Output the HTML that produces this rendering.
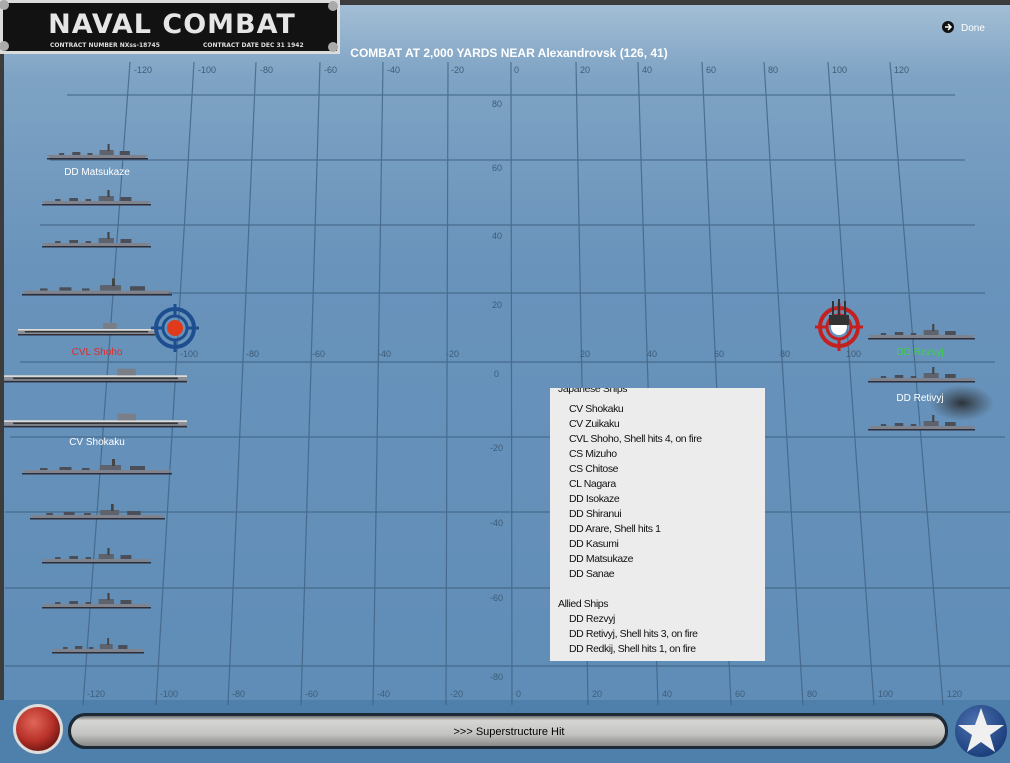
<!DOCTYPE html>
<html><head><meta charset="utf-8"><style>
html,body{margin:0;padding:0;width:1010px;height:763px;overflow:hidden;background:#5f8ab0;font-family:"Liberation Sans",sans-serif}
svg{position:absolute;left:0;top:0}
.pop{position:absolute;left:550px;top:388px;width:215px;height:273px;background:#ececec;font-size:10.5px;color:#111;letter-spacing:-0.4px;overflow:hidden}
.pop div{height:15px;line-height:15px;padding-left:19px}
.pop .h{padding-left:8px}
</style></head><body>
<svg width="1010" height="763" viewBox="0 0 1010 763">
<defs>
<linearGradient id="sea" x1="0" y1="0" x2="0" y2="1">
<stop offset="0" stop-color="#a6c0d6"/><stop offset="0.1" stop-color="#7ea3c4"/><stop offset="0.35" stop-color="#6993bb"/><stop offset="1" stop-color="#5e8cb6"/></linearGradient>
<linearGradient id="bar" x1="0" y1="0" x2="0" y2="1">
<stop offset="0" stop-color="#6f6f6f"/><stop offset="0.15" stop-color="#d6d6d4"/><stop offset="0.6" stop-color="#c4c4c2"/><stop offset="1" stop-color="#8a8a88"/></linearGradient>
<radialGradient id="red" cx="0.4" cy="0.35" r="0.7"><stop offset="0" stop-color="#e0675a"/><stop offset="0.6" stop-color="#b8322a"/><stop offset="1" stop-color="#6e1410"/></radialGradient>
<radialGradient id="blu" cx="0.4" cy="0.35" r="0.7"><stop offset="0" stop-color="#4d73b0"/><stop offset="1" stop-color="#183a78"/></radialGradient>
<radialGradient id="smk" cx="0.5" cy="0.5" r="0.5"><stop offset="0" stop-color="#222" stop-opacity="0.85"/><stop offset="1" stop-color="#333" stop-opacity="0"/></radialGradient>
<g id="ship"><path d="M0 6 L100 6 L96 10 L4 10 Z" fill="#7f838e"/><rect x="0" y="9" width="100" height="1.5" fill="#2e2e3a"/><rect x="52" y="1" width="14" height="5" fill="#5e626c"/><rect x="60" y="-5" width="2" height="7" fill="#444"/><rect x="25" y="3" width="8" height="3" fill="#4a4e58"/><rect x="72" y="2" width="10" height="4" fill="#4a4e58"/><rect x="12" y="4" width="5" height="2" fill="#4a4e58"/><rect x="40" y="4" width="5" height="2" fill="#4a4e58"/></g>
<g id="cv"><rect x="0" y="3" width="100" height="6" fill="#8a8e96"/><rect x="0" y="3" width="100" height="1.5" fill="#dedede"/><rect x="5" y="5" width="90" height="1.5" fill="#333"/><rect x="0" y="8" width="100" height="1.5" fill="#2e2e3a"/><rect x="62" y="-3" width="10" height="6" fill="#7a7e86"/></g>
</defs>
<rect width="1010" height="763" fill="url(#sea)"/>
<rect x="0" y="0" width="1010" height="5" fill="#3c3c3c"/>
<rect x="0" y="0" width="4" height="763" fill="#3c3c3c"/>
<rect x="0" y="700" width="1010" height="63" fill="#4f80ab"/>
<g stroke="#3d5f80" stroke-width="1.2" opacity="0.75">
<line x1="67" y1="95" x2="955" y2="95"/>
<line x1="50" y1="160" x2="965" y2="160"/>
<line x1="40" y1="225" x2="975" y2="225"/>
<line x1="30" y1="293" x2="985" y2="293"/>
<line x1="20" y1="362" x2="995" y2="362"/>
<line x1="10" y1="437" x2="1005" y2="437"/>
<line x1="5" y1="512" x2="1010" y2="512"/>
<line x1="5" y1="588" x2="1010" y2="588"/>
<line x1="5" y1="666" x2="1010" y2="666"/>
<line x1="130" y1="62" x2="83" y2="705"/>
<line x1="194" y1="62" x2="156" y2="705"/>
<line x1="256" y1="62" x2="228" y2="705"/>
<line x1="320" y1="62" x2="301" y2="705"/>
<line x1="383" y1="62" x2="373" y2="705"/>
<line x1="448" y1="62" x2="446" y2="705"/>
<line x1="511" y1="62" x2="512" y2="705"/>
<line x1="576" y1="62" x2="588" y2="705"/>
<line x1="638" y1="62" x2="658" y2="705"/>
<line x1="702" y1="62" x2="731" y2="705"/>
<line x1="764" y1="62" x2="803" y2="705"/>
<line x1="828" y1="62" x2="874" y2="705"/>
<line x1="890" y1="62" x2="943" y2="705"/>
</g>
<g font-size="9" fill="#3e5c78" font-family="Liberation Sans,sans-serif">
<text x="134" y="73">-120</text><text x="198" y="73">-100</text><text x="260" y="73">-80</text><text x="324" y="73">-60</text><text x="387" y="73">-40</text><text x="451" y="73">-20</text><text x="514" y="73">0</text><text x="580" y="73">20</text><text x="642" y="73">40</text><text x="706" y="73">60</text><text x="768" y="73">80</text><text x="832" y="73">100</text><text x="894" y="73">120</text>
<text x="492" y="107">80</text><text x="492" y="171">60</text><text x="492" y="239">40</text><text x="492" y="308">20</text><text x="494" y="377">0</text><text x="490" y="451">-20</text><text x="490" y="526">-40</text><text x="490" y="601">-60</text><text x="490" y="680">-80</text>
<text x="180" y="357">-100</text><text x="246" y="357">-80</text><text x="312" y="357">-60</text><text x="378" y="357">-40</text><text x="446" y="357">-20</text><text x="580" y="357">20</text><text x="647" y="357">40</text><text x="714" y="357">60</text><text x="780" y="357">80</text><text x="846" y="357">100</text>
<text x="87" y="697">-120</text><text x="160" y="697">-100</text><text x="232" y="697">-80</text><text x="305" y="697">-60</text><text x="377" y="697">-40</text><text x="450" y="697">-20</text><text x="516" y="697">0</text><text x="592" y="697">20</text><text x="662" y="697">40</text><text x="735" y="697">60</text><text x="807" y="697">80</text><text x="878" y="697">100</text><text x="947" y="697">120</text>
</g>
<use href="#ship" transform="translate(47,149) scale(1.01,1)"/>
<use href="#ship" transform="translate(42,195) scale(1.09,1)"/>
<use href="#ship" transform="translate(42,237) scale(1.09,1)"/>
<use href="#ship" transform="translate(22,284) scale(1.5,1.1)"/>
<use href="#cv" transform="translate(18,326) scale(1.37,1)"/>
<use href="#cv" transform="translate(4,372) scale(1.83,1.1)"/>
<use href="#cv" transform="translate(4,417) scale(1.83,1.1)"/>
<use href="#ship" transform="translate(22,464) scale(1.5,1)"/>
<use href="#ship" transform="translate(30,509) scale(1.35,1)"/>
<use href="#ship" transform="translate(42,553) scale(1.09,1)"/>
<use href="#ship" transform="translate(42,598) scale(1.09,1)"/>
<use href="#ship" transform="translate(52,643) scale(0.92,1)"/>
<use href="#ship" transform="translate(868,329) scale(1.07,1)"/>
<use href="#ship" transform="translate(868,372) scale(1.07,1)"/>
<use href="#ship" transform="translate(868,420) scale(1.07,1)"/>
<ellipse cx="962" cy="403" rx="32" ry="18" fill="url(#smk)"/>
<g font-size="10" fill="#fff" text-anchor="middle">
<text x="97" y="175">DD Matsukaze</text><text x="97" y="355" fill="#e02a2a">CVL Shoho</text><text x="97" y="445">CV Shokaku</text><text x="920" y="401">DD Retivyj</text><text x="920" y="355" fill="#3fd04a">DD Rezvyj</text>
</g>
<g transform="translate(175,328)"><circle r="19" fill="none" stroke="#1d4f90" stroke-width="4"/><circle r="12" fill="none" stroke="#1d4f90" stroke-width="3"/><circle r="8" fill="#e03a1a"/><path d="M-24 0H-12M12 0H24M0 -24V-12M0 12V24" stroke="#1d4f90" stroke-width="3"/></g>
<g transform="translate(839,327)"><circle r="19" fill="none" stroke="#c42020" stroke-width="4"/><circle r="12" fill="none" stroke="#c42020" stroke-width="3"/><circle r="8" fill="#fff"/><path d="M-24 0H-12M12 0H24M0 -24V-12M0 12V24" stroke="#c42020" stroke-width="3"/><rect x="-10" y="-12" width="20" height="10" fill="#333"/><path d="M-6 -12V-26M0 -12V-28M6 -12V-26" stroke="#333" stroke-width="2"/></g>
<rect x="0" y="0" width="340" height="54" fill="#dcdcdc"/>
<rect x="3" y="3" width="334" height="48" fill="#121212"/>
<text x="172" y="33" font-size="27" font-weight="bold" fill="#e6e6e6" text-anchor="middle" font-family="DejaVu Sans,sans-serif" letter-spacing="1">NAVAL COMBAT</text>
<text x="50" y="47" font-size="6" font-weight="bold" fill="#ddd" font-family="DejaVu Sans,sans-serif">CONTRACT NUMBER  NXss-18745</text>
<text x="203" y="47" font-size="6" font-weight="bold" fill="#ddd" font-family="DejaVu Sans,sans-serif">CONTRACT DATE DEC 31 1942</text>
<circle cx="4" cy="5" r="5" fill="#aaa"/><circle cx="333" cy="6" r="5" fill="#aaa"/><circle cx="4" cy="46" r="5" fill="#aaa"/><circle cx="333" cy="47" r="5" fill="#aaa"/>
<text x="509" y="57" font-size="12" font-weight="bold" fill="#fff" text-anchor="middle">COMBAT AT 2,000 YARDS NEAR Alexandrovsk (126, 41)</text>
<circle cx="948" cy="27" r="6" fill="#111"/><path d="M945 27h5M948 24l3 3-3 3" stroke="#fff" stroke-width="1.5" fill="none"/>
<text x="961" y="31" font-size="10" fill="#fff">Done</text>
<circle cx="38" cy="729" r="25" fill="#ddd"/><circle cx="38" cy="729" r="22" fill="url(#red)"/>
<rect x="68" y="713" width="880" height="36" rx="17" fill="#1d2a36"/>
<rect x="71" y="716" width="874" height="30" rx="15" fill="url(#bar)"/>
<text x="509" y="735" font-size="11" fill="#000" text-anchor="middle">&gt;&gt;&gt; Superstructure Hit</text>
<circle cx="981" cy="731" r="26" fill="url(#blu)"/>
<polygon points="981,708 987,725 1004,725 990,735 995,752 981,742 967,752 972,735 958,725 975,725" fill="#f0f0f0"/>
</svg>
<div class="pop">
<div class="h" style="height:14px;line-height:2px;overflow:hidden">Japanese Ships</div>
<div>CV Shokaku</div><div>CV Zuikaku</div><div>CVL Shoho, Shell hits 4,  on fire</div><div>CS Mizuho</div><div>CS Chitose</div><div>CL Nagara</div><div>DD Isokaze</div><div>DD Shiranui</div><div>DD Arare, Shell hits 1</div><div>DD Kasumi</div><div>DD Matsukaze</div><div>DD Sanae</div><div></div>
<div class="h">Allied Ships</div><div>DD Rezvyj</div><div>DD Retivyj, Shell hits 3,  on fire</div><div>DD Redkij, Shell hits 1,  on fire</div>
</div>
</body></html>
